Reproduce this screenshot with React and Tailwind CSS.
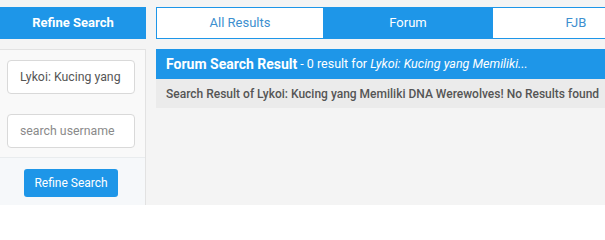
import React from "react";

const Field = ({ value, placeholder }) => (
  <div className="w-[128px] h-[34px] rounded-[4px] border border-[#d9d9d9] bg-white px-[12px] flex items-center">
    <div className="flex-1 min-w-0 overflow-hidden whitespace-nowrap text-[12.3px]">
      {value ? (
        <span className="text-[#555]">{value}</span>
      ) : (
        <span className="text-[#8a8a8a]">{placeholder}</span>
      )}
    </div>
  </div>
);

const Sidebar = () => {
  return (
    <div className="w-[146px] shrink-0">
      <div className="h-[32px] bg-[#1e96e8] flex items-center justify-center text-white text-[13px] font-bold">
        Refine Search
      </div>
      <div className="mt-[10px] border-t border-r border-[#e2e2e2] bg-[#f9f9f9] h-[200px]">
        <div className="pl-[7px] pr-[10px] pt-[10px] pb-[9px] flex flex-col gap-[20px]">
          <Field value="Lykoi: Kucing yang Memiliki DNA Werewolves!" />
          <Field placeholder="search username" />
        </div>
        <div className="border-t border-[#e9ecee] bg-[#f6f8fa] pt-[11px] pb-4 pl-[24px]">
          <button className="w-[94px] h-[28px] rounded-[3px] bg-[#1e96e8] text-white text-[12px]">
            Refine Search
          </button>
        </div>
      </div>
    </div>
  );
};

const tabs = ["All Results", "Forum", "FJB"];

const Results = () => {
  return (
    <div className="ml-[10px] flex-1 min-w-0 overflow-hidden">
      <div className="flex h-[32px]">
        {tabs.map((t) =>
          t === "Forum" ? (
            <div
              key={t}
              className="w-[168px] shrink-0 bg-[#1e96e8] text-white text-[13px] flex items-center justify-center"
            >
              {t}
            </div>
          ) : (
            <div
              key={t}
              className="w-[168px] shrink-0 bg-white border border-[#1e96e8] text-[#3d8fcf] text-[13px] flex items-center justify-center"
            >
              {t}
            </div>
          )
        )}
      </div>
      <div className="mt-[10px] h-[30px] bg-[#1e96e8] text-white flex items-center px-[10px] whitespace-nowrap">
        <span className="text-[14px] font-bold">Forum Search Result</span>
        <span className="text-[12.5px] ml-[3px]">
          - 0 result for <i>Lykoi: Kucing yang Memiliki...</i>
        </span>
      </div>
      <div className="h-[29px] bg-[#ebebeb] text-[#555] text-[12px] font-medium flex items-center px-[10px] whitespace-nowrap">
        Search Result of Lykoi: Kucing yang Memiliki DNA Werewolves! No Results found
      </div>
    </div>
  );
};

export default function App() {
  return (
    <div
      className="w-[605px] h-[205px] overflow-hidden bg-[#f4f4f4] pt-[7px] flex"
      style={{ fontFamily: "Roboto, 'Liberation Sans', sans-serif" }}
    >
      <Sidebar />
      <Results />
    </div>
  );
}
